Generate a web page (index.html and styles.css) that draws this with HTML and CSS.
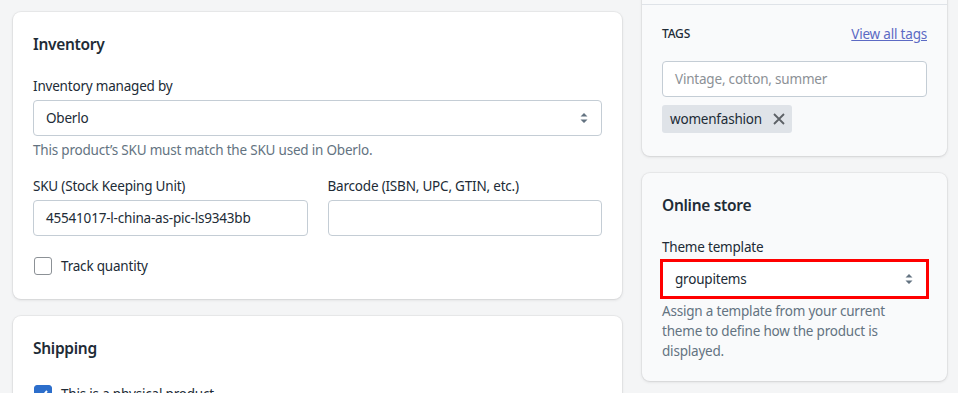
FILE: index.html
```html
<!DOCTYPE html>
<html>
    <head lang="en">
        <meta charset="UTF-8">
        <title>Product</title>
        <link rel="stylesheet" href="styles.css">
    </head>
    <body>
        <div class="layout">
            <div class="main">
                <div class="card">
                    <h2 class="card-title">Inventory</h2>
                    <div class="field">
                        <label class="label">Inventory managed by</label>
                        <div class="select">
                            <span>Oberlo</span>
                            <svg class="arrows" width="10" height="14" viewBox="0 0 10 14"><path d="M5 2 L8.5 5.5 H1.5 Z M5 12 L8.5 8.5 H1.5 Z" fill="#637381"/></svg>
                        </div>
                        <p class="help">This product’s SKU must match the SKU used in Oberlo.</p>
                    </div>
                    <div class="row">
                        <div class="field">
                            <label class="label">SKU (Stock Keeping Unit)</label>
                            <div class="input">45541017-l-china-as-pic-ls9343bb</div>
                        </div>
                        <div class="field">
                            <label class="label">Barcode (ISBN, UPC, GTIN, etc.)</label>
                            <div class="input"></div>
                        </div>
                    </div>
                    <label class="check">
                        <span class="box"></span>
                        Track quantity
                    </label>
                </div>
                <div class="card">
                    <h2 class="card-title">Shipping</h2>
                    <label class="check check-low">
                        <span class="box checked">
                            <svg width="12" height="12" viewBox="0 0 12 12"><path d="M2 6.5 L5 9 L10 3" stroke="#fff" stroke-width="2" fill="none"/></svg>
                        </span>
                        This is a physical product
                    </label>
                </div>
            </div>
            <div class="side">
                <div class="card card-side">
                    <div class="section-top"></div>
                    <div class="section">
                        <div class="tags-head">
                            <span class="caps">TAGS</span>
                            <a class="link" href="#">View all tags</a>
                        </div>
                        <div class="input placeholder">Vintage, cotton, summer</div>
                        <div class="tag">
                            womenfashion
                            <svg width="12" height="12" viewBox="0 0 12 12"><path d="M1 1 L11 11 M11 1 L1 11" stroke="#5c6166" stroke-width="1.8"/></svg>
                        </div>
                    </div>
                </div>
                <div class="card card-side">
                    <h2 class="card-title">Online store</h2>
                    <div class="field">
                        <label class="label">Theme template</label>
                        <div class="select marked">
                            <span>groupitems</span>
                            <svg class="arrows" width="10" height="14" viewBox="0 0 10 14"><path d="M5 2 L8.5 5.5 H1.5 Z M5 12 L8.5 8.5 H1.5 Z" fill="#637381"/></svg>
                        </div>
                        <p class="help">Assign a template from your current theme to define how the product is displayed.</p>
                    </div>
                </div>
            </div>
        </div>
    </body>
</html>
```

FILE: styles.css
```css
* {
    margin: 0;
    padding: 0;
    box-sizing: border-box;
}
body {
    background: #f4f5f6;
    font-family: "Noto Sans", "Open Sans", sans-serif;
    font-size: 13.5px;
    letter-spacing: -0.2px;
    line-height: 20px;
    color: #212b36;
    overflow: hidden;
    height: 393px;
}
.layout {
    display: flex;
    gap: 20px;
    padding: 12px 0 0 13px;
}
.main {
    width: 609px;
    display: flex;
    flex-direction: column;
    gap: 17px;
}
.side {
    width: 305px;
    display: flex;
    flex-direction: column;
    gap: 17px;
    margin-top: -32px;
}
.card {
    background: #fff;
    border-radius: 8px;
    box-shadow: 0 0 0 1px rgba(63, 63, 68, 0.05), 0 1px 3px rgba(63, 63, 68, 0.15);
    padding: 20px 20px 23px;
}
.card-side {
    background: #f9fafb;
    padding-bottom: 20px;
}
.card-title {
    font-size: 15.5px;
    letter-spacing: -0.3px;
    font-weight: 600;
    line-height: 24px;
    margin-bottom: 20px;
}
.label {
    display: block;
    margin-bottom: 4px;
}
.select, .input {
    height: 36px;
    border: 1px solid #c4cdd5;
    border-radius: 4px;
    background: #fff;
    padding: 0 12px;
    display: flex;
    align-items: center;
    justify-content: space-between;
}
.marked {
    outline: 3px solid #ff0000;
    outline-offset: -1px;
    border-radius: 0;
}
.help {
    color: #637381;
    margin-top: 4px;
}
.row {
    display: flex;
    gap: 20px;
    margin-top: 16px;
}
.row .field {
    flex: 1;
}
.check {
    display: flex;
    align-items: center;
    gap: 9px;
    margin-top: 20px;
    padding-left: 1px;
}
.check-low {
    margin-top: 24px;
}
.box {
    width: 18px;
    height: 18px;
    border: 1px solid #8c9196;
    border-radius: 3px;
    background: #fff;
    display: flex;
    align-items: center;
    justify-content: center;
}
.box.checked {
    background: #2c6ecb;
    border-color: #2c6ecb;
}
.section-top {
    height: 5px;
    border-bottom: 1px solid #dfe3e8;
    margin: 0 -20px;
}
.section {
    padding-top: 19px;
    padding-bottom: 3px;
}
.tags-head {
    display: flex;
    justify-content: space-between;
    align-items: center;
    margin-bottom: 17px;
}
.caps {
    font-size: 12px;
    font-weight: 500;
}
.link {
    color: #5c6ac4;
}
.placeholder {
    color: #8c9196;
}
.tag {
    display: flex;
    width: fit-content;
    align-items: center;
    gap: 11px;
    margin-top: 8px;
    height: 28px;
    padding: 0 7px 0 8px;
    background: #dfe3e8;
    border-radius: 3px;
}
```
